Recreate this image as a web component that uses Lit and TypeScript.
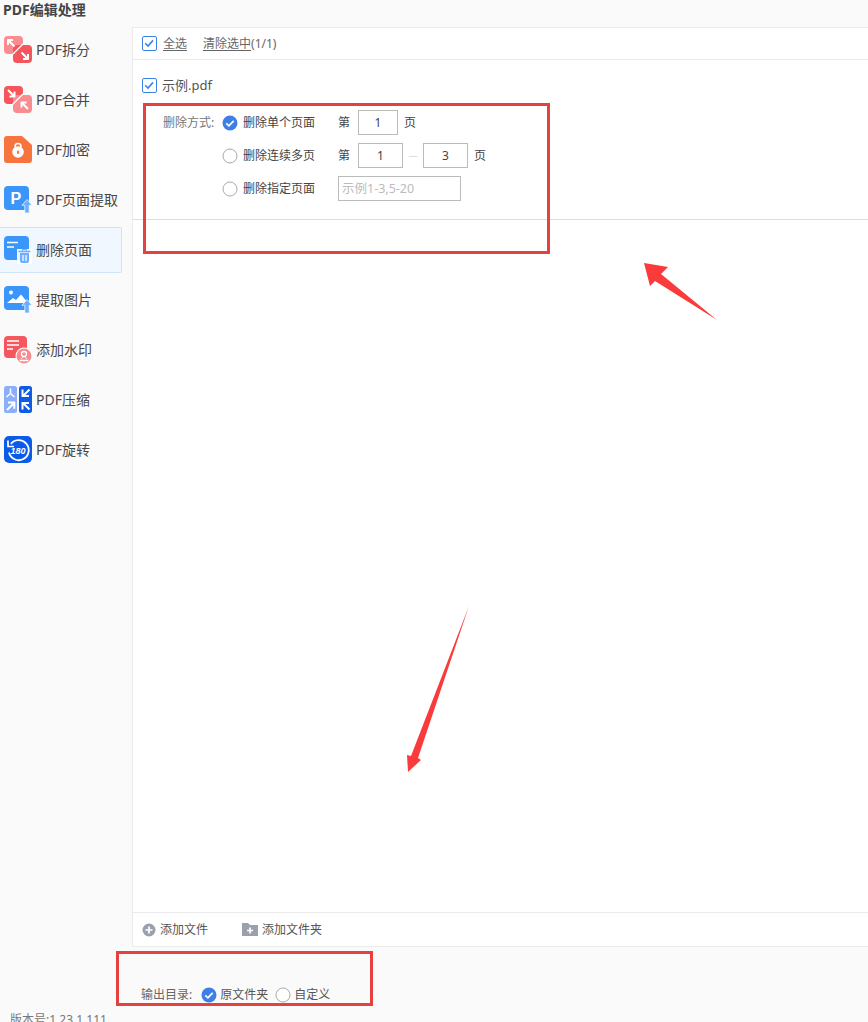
import { LitElement, html, css, svg } from "lit";
import { customElement } from "lit/decorators.js";

const check = svg`<path d="M3.200 7.200l2.800 2.800 5-5.600" fill="none" stroke="#3d83e6" stroke-width="1.600"/>`;

const upArrow = svg`<path d="M23 13.500l5 5.800H25.200v7.700h-4.400v-7.700H18z" fill="#6eaefc" stroke="#fff" stroke-width="0.700"/>`;

const icons: Record<string, unknown> = {
  split: svg`<rect x="0" y="0" width="19" height="18" rx="4" fill="#f88c90"/><rect x="9" y="9" width="19" height="18" rx="4" fill="#f4565c"/>
    <path d="M19.500 7.500L7.500 19.500" stroke="#fff" stroke-width="1.300"/>
    <path d="M3.500 4h5.500M4 3.500v5.500M4.500 4.500l6 6" stroke="#fff" stroke-width="2" fill="none"/>
    <path d="M24.500 23h-5.500M24 23.500v-5.500M23.500 22.500l-6-6" stroke="#fff" stroke-width="2" fill="none"/>`,
  merge: svg`<rect x="0" y="0" width="19" height="18" rx="4" fill="#f4565c"/><rect x="9" y="9" width="19" height="18" rx="4" fill="#f88c90"/>
    <path d="M19.500 7.500L7.500 19.500" stroke="#fff" stroke-width="1.300"/>
    <path d="M11 10.500h-5.500M10.500 11v-5.500M10 10L4 4" stroke="#fff" stroke-width="2" fill="none"/>
    <path d="M17 16.500h5.500M17.500 16v5.500M18 17l6 6" stroke="#fff" stroke-width="2" fill="none"/>`,
  lock: svg`<path d="M3 0h15l10 9v15a3 3 0 0 1-3 3H3a3 3 0 0 1-3-3V3a3 3 0 0 1 3-3z" fill="#f7743f"/>
    <circle cx="14" cy="16" r="5.800" fill="#fff"/><path d="M11 11.500v-1a3 3 0 0 1 6 0v1" fill="none" stroke="#fff" stroke-width="1.600"/><rect x="13" y="14.500" width="2" height="3.500" rx="1" fill="#f7743f"/>`,
  extract: svg`<rect x="0" y="0" width="25" height="24" rx="4" fill="#3b96fb"/>
    <text x="6.500" y="17.500" font-family="Liberation Sans" font-size="16" font-weight="700" fill="#fff">P</text>${upArrow}`,
  del: svg`<rect x="0" y="0" width="25" height="24" rx="4" fill="#3b96fb"/>
    <path d="M3 6.500h11M3 11h7" stroke="#fff" stroke-width="1.600"/>
    <path d="M13 13h15v15H13z" fill="#fff" opacity="0.900"/>
    <path d="M14.500 15.500h12" stroke="#6eaefc" stroke-width="1.500"/><path d="M18.500 15v-1.500h4V15" stroke="#6eaefc" fill="none"/>
    <path d="M16 17h9v8a2 2 0 0 1-2 2h-5a2 2 0 0 1-2-2z" fill="#6eaefc"/><path d="M19 19v6M22 19v6" stroke="#fff" stroke-width="1.200"/>`,
  image: svg`<rect x="0" y="0" width="25" height="24" rx="4" fill="#3b96fb"/>
    <circle cx="7" cy="6.500" r="2" fill="#fff"/><path d="M3 17l6-5 3 2 5-5.500 7 8.500H3z" fill="#fff"/>${upArrow}`,
  mark: svg`<rect x="0" y="0" width="23" height="22" rx="4" fill="#f4585e"/>
    <path d="M3 5h12M3 9h12M3 13h6" stroke="#fff" stroke-width="1.400"/>
    <circle cx="20" cy="20" r="8.500" fill="#fff"/><circle cx="20" cy="20" r="7.500" fill="#f68c8e"/>
    <circle cx="20" cy="18" r="2.500" fill="none" stroke="#fff" stroke-width="1.300"/><path d="M15.500 24.500h9" stroke="#fff" stroke-width="1.500"/><path d="M17 23c1-1 2-1.500 2-2.500M23 23c-1-1-2-1.500-2-2.500" fill="none" stroke="#fff"/>`,
  zip: svg`<rect x="0" y="0" width="13" height="27" rx="2.500" fill="#8aaef9"/><rect x="15" y="0" width="13" height="27" rx="2.500" fill="#0f5be6"/>
    <path d="M6.500 2.500v4.500M6.500 7.500L2.500 11M6.500 7.500L10.500 11" stroke="#fff" stroke-width="1.500" fill="none"/>
    <path d="M3 24l6-6M4 16.500h6.300v6.300" stroke="#fff" stroke-width="2" fill="none"/>
    <path d="M25.500 3.500l-6 6M18.500 3.500V10h6.500" stroke="#fff" stroke-width="2" fill="none"/>
    <path d="M25.500 23.500l-6-6M18.500 23.500V17h6.500" stroke="#fff" stroke-width="2" fill="none"/>`,
  rotate: svg`<rect x="0" y="0" width="28" height="27" rx="5" fill="#0b5be8"/>
    <path d="M6.500 8.500A10 10 0 1 1 5 16.500" fill="none" stroke="#fff" stroke-width="1.800"/><path d="M3 4v7h7" fill="#0b5be8"/><path d="M4 4.500v6h6" fill="none" stroke="#fff" stroke-width="1.700"/>
    <text x="6.500" y="17.500" font-family="Liberation Sans" font-size="9" font-style="italic" font-weight="700" fill="#fff">180</text>`,
};

const nav = [
  ["split", "PDF拆分"],
  ["merge", "PDF合并"],
  ["lock", "PDF加密"],
  ["extract", "PDF页面提取"],
  ["del", "删除页面"],
  ["image", "提取图片"],
  ["mark", "添加水印"],
  ["zip", "PDF压缩"],
  ["rotate", "PDF旋转"],
];

@customElement("app-root")
export class AppRoot extends LitElement {
  static styles = css`
    :host {
      display: block;
      position: relative;
      width: 868px;
      height: 1022px;
      overflow: hidden;
      background: #fafafa;
      color: #333;
      font-family: "Noto Sans", "Noto Sans CJK SC", sans-serif;
      font-size: 12px;
      line-height: 16px;
    }
    .title {
      height: 27px;
      padding-left: 3px;
      line-height: 20px;
      font-size: 14px;
      font-weight: 700;
      color: #444;
    }
    .body { display: flex; height: 920px; }
    .side {
      width: 132px;
      flex: none;
      display: flex;
      flex-direction: column;
      gap: 4px;
    }
    .item {
      width: 122px;
      height: 46px;
      box-sizing: border-box;
      display: flex;
      align-items: center;
      gap: 4px;
      padding-left: 4px;
      font-size: 14px;
      line-height: 20px;
      color: #484848;
      white-space: nowrap;
    }
    .item svg { width: 28px; height: 28px; flex: none; display: block; }
    .item.active {
      background: #f0f7ff;
      border: 1px solid #cfe3f7;
      border-left: 0;
      border-radius: 0 2px 2px 0;
    }
    .panel {
      flex: 1;
      display: flex;
      flex-direction: column;
      background: #fff;
      border: 1px solid #ebebeb;
      border-right: 0;
      box-sizing: border-box;
      min-width: 0;
    }
    .toolbar {
      height: 32px;
      flex: none;
      box-sizing: border-box;
      border-bottom: 1px solid #ebebeb;
      display: flex;
      align-items: center;
      padding-left: 9px;
      color: #666;
    }
    .cb {
      width: 15px;
      height: 15px;
      box-sizing: border-box;
      border: 1px solid #3d83e6;
      border-radius: 2px;
      flex: none;
      display: block;
    }
    .cb svg { display: block; width: 13px; height: 13px; }
    .u { text-decoration: underline; text-underline-offset: 2px; }
    .toolbar .all { margin: 0 16px 0 6px; }
    .file {
      height: 46px;
      flex: none;
      box-sizing: border-box;
      padding: 18px 0 0 9px;
      display: flex;
      align-items: flex-start;
      gap: 5px;
      font-size: 13px;
      line-height: 15px;
      color: #555;
    }
    .opts {
      height: 114px;
      flex: none;
      box-sizing: border-box;
      border-bottom: 1px solid #ddd;
      padding: 0 0 0 30px;
      display: grid;
      grid-template-columns: 60px 115px auto;
      grid-auto-rows: 33px;
      align-items: center;
      align-content: start;
      justify-content: start;
    }
    .lab { color: #777; }
    .radio-line { display: flex; align-items: center; gap: 5px; color: #444; margin-left: -1px; }
    .radio {
      width: 16px;
      height: 16px;
      flex: none;
      display: block;
    }
    .pg { display: flex; align-items: center; color: #444; }
    .pg .d { width: 20px; }
    .box {
      height: 25px;
      box-sizing: border-box;
      border: 1px solid #bbb;
      display: flex;
      align-items: center;
      justify-content: center;
      color: #444;
      background: #fff;
    }
    .b40 { width: 40px; }
    .b45 { width: 45px; }
    .ph { width: 123px; justify-content: flex-start; padding-left: 3px; color: #bbb; font-size: 12.500px; }
    .sep { width: 20px; text-align: center; color: #c4c4c4; font-size: 9px; }
    .u1 { margin-left: 6px; }
    .spacer { flex: 1; }
    .foot {
      height: 34px;
      flex: none;
      box-sizing: border-box;
      border-top: 1px solid #ebebeb;
      display: flex;
      align-items: center;
      padding-left: 9px;
      color: #555;
    }
    .foot svg { display: block; flex: none; }
    .foot .t1 { margin: 0 34px 0 4px; }
    .foot .t2 { margin-left: 4px; }
    .out {
      height: 56px;
      box-sizing: border-box;
      display: flex;
      align-items: flex-end;
      padding: 0 0 0 141px;
      color: #666;
    }
    .out .radio { margin-left: 9px; margin-right: 3px; }
    .out .r2 { margin-left: 7px; margin-right: 3px; }
    .out span { color: #555; }
    .ver { padding-left: 10px; margin-top: 9px; color: #777; }
    .mark {
      position: absolute;
      box-sizing: border-box;
      border: 3px solid #e54141;
      pointer-events: none;
    }
    .m1 { left: 143px; top: 103px; width: 407px; height: 151px; }
    .m2 { left: 116px; top: 951px; width: 257px; height: 55px; }
    .arrows { position: absolute; left: 0; top: 0; pointer-events: none; }
  `;

  private radio(on: boolean) {
    return html`<svg class="radio" viewBox="0 0 16 16">
      ${on
        ? svg`<circle cx="8" cy="8" r="7.500" fill="#3d7fe6"/><path d="M4.300 8.300l2.600 2.500 4.800-5" fill="none" stroke="#fff" stroke-width="1.700"/>`
        : svg`<circle cx="8" cy="8" r="7" fill="#fff" stroke="#aaa"/>`}
    </svg>`;
  }

  render() {
    return html`
      <div class="title">PDF编辑处理</div>
      <div class="body">
        <nav class="side">
          ${nav.map(
            ([k, t]) => html`<div class="item ${k === "del" ? "active" : ""}">
              <svg viewBox="0 0 28 28">${icons[k]}</svg><span>${t}</span>
            </div>`
          )}
        </nav>
        <main class="panel">
          <div class="toolbar">
            <span class="cb"><svg viewBox="0 0 13 13"><g transform="translate(-1 -1)">${check}</g></svg></span>
            <span class="u all">全选</span>
            <span><span class="u">清除选中</span>(1/1)</span>
          </div>
          <div class="file">
            <span class="cb"><svg viewBox="0 0 13 13"><g transform="translate(-1 -1)">${check}</g></svg></span>
            <span>示例.pdf</span>
          </div>
          <div class="opts">
            <span class="lab">删除方式:</span>
            <span class="radio-line">${this.radio(true)}删除单个页面</span>
            <span class="pg"><span class="d">第</span><span class="box b40">1</span><span class="u1">页</span></span>
            <span></span>
            <span class="radio-line">${this.radio(false)}删除连续多页</span>
            <span class="pg"><span class="d">第</span><span class="box b45">1</span><span class="sep">—</span><span class="box b45">3</span><span class="u1">页</span></span>
            <span></span>
            <span class="radio-line">${this.radio(false)}删除指定页面</span>
            <span class="pg"><span class="box ph">示例1-3,5-20</span></span>
          </div>
          <div class="spacer"></div>
          <div class="foot">
            <svg width="14" height="14" viewBox="0 0 14 14"><circle cx="7" cy="7" r="6.500" fill="#9aa0ac"/><path d="M7 3.500v7M3.500 7h7" stroke="#fff" stroke-width="1.700"/></svg>
            <span class="t1">添加文件</span>
            <svg width="16" height="13" viewBox="0 0 16 13"><path d="M0 0h6l2 2h8v11H0z" fill="#9aa0ac"/><path d="M8 4.500v6M5 7.500h6" stroke="#fff" stroke-width="1.700"/></svg>
            <span class="t2">添加文件夹</span>
          </div>
        </main>
      </div>
      <div class="out">
        输出目录:${this.radio(true)}<span>原文件夹</span>
        <svg class="radio r2" viewBox="0 0 16 16"><circle cx="8" cy="8" r="7" fill="#fff" stroke="#aaa"/></svg><span>自定义</span>
      </div>
      <div class="ver">版本号:1.23.1.111</div>
      <div class="mark m1"></div>
      <div class="mark m2"></div>
      <svg class="arrows" width="868" height="1022" viewBox="0 0 868 1022">
        <path d="M644 263L668 267L661 274L717 320L655 281L650 286z" fill="#fb3b3b"/>
        <path d="M469 606L418 758L421 760L408 772L407 755L411 756z" fill="#fb3b3b"/>
      </svg>
    `;
  }
}
